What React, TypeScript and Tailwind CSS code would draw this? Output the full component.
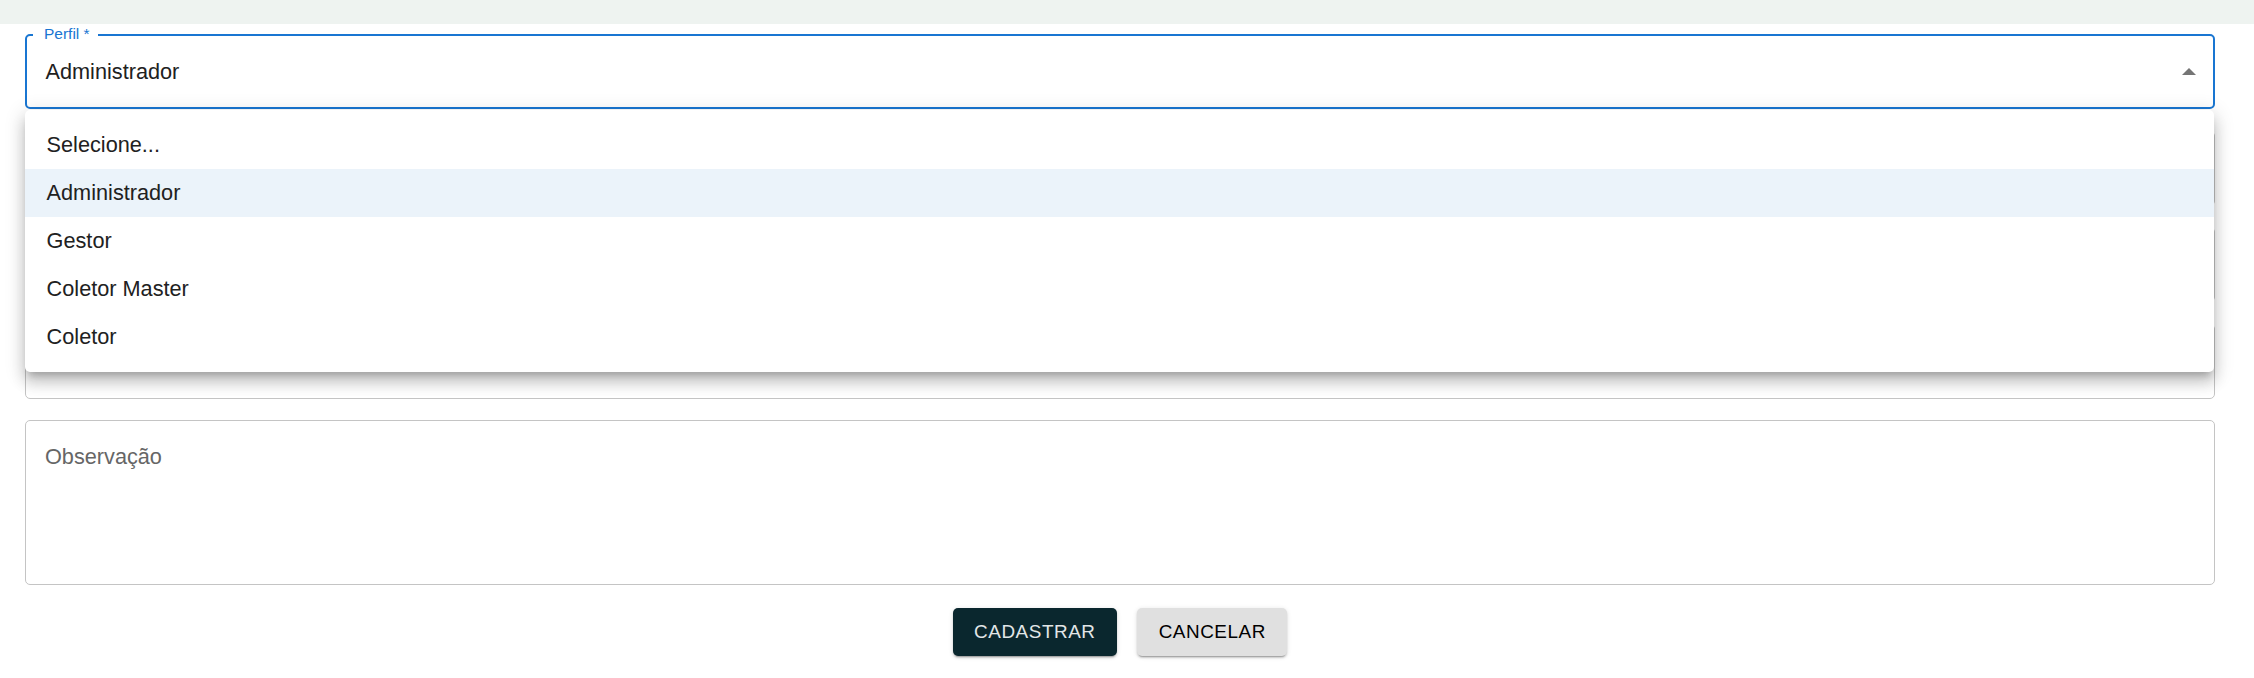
import React from "react";

const items = ["Selecione...", "Administrador", "Gestor", "Coletor Master", "Coletor"];

function EmptyField() {
  return <div className="h-[75px] rounded-[5px] border border-[#c4c4c4] bg-white" />;
}

export default function App() {
  return (
    <div className="min-h-[678px] w-full bg-white text-[#212121]" style={{ fontFamily: '"Liberation Sans", Arial, Helvetica, sans-serif' }}>
      <div className="h-[24px] w-full bg-[#eef3f0]" />
      <div className="pl-[25px] pr-[39px] pt-[10px]">
        <div className="flex flex-col gap-[21.6px]">
          {/* Perfil select (focused, open) */}
          <div className="relative z-10">
            <div className="relative flex h-[75px] items-center rounded-[5px] border-2 border-[#1976d2] bg-white pl-[18.5px] pr-[17px]">
              <span className="absolute left-[6px] top-[-12px] bg-white pl-[11px] pr-[8px] text-[15.5px] leading-[20px] text-[#1976d2]">
                Perfil *
              </span>
              <span className="flex-1 text-[21.7px] leading-[30px]">Administrador</span>
              <svg width="14" height="7" viewBox="0 0 14 7" className="block">
                <path d="M0 7 L7 0 L14 7 Z" fill="#757575" />
              </svg>
            </div>
            {/* Dropdown menu */}
            <div className="absolute left-0 right-[1px] top-[calc(100%+1px)] rounded-[5px] bg-white py-[10.8px] shadow-[0_7px_7px_-4px_rgba(0,0,0,0.2),0_11px_14px_1px_rgba(0,0,0,0.14),0_4px_19px_3px_rgba(0,0,0,0.12)]">
              {items.map((it, i) => (
                <div
                  key={it}
                  className={`flex h-[48px] items-center px-[21.6px] text-[21.7px] ${i === 1 ? "bg-[#ebf3fa]" : "bg-white"}`}
                >
                  {it}
                </div>
              ))}
            </div>
          </div>
          <EmptyField />
          <EmptyField />
          <EmptyField />
          {/* Observação */}
          <div className="h-[165px] rounded-[5px] border border-[#c4c4c4] bg-white pl-[19px] pt-[21px]">
            <span className="text-[21.7px] leading-[30px] text-[#666666]">Observação</span>
          </div>
        </div>
        <div className="mt-[23px] flex justify-center gap-[20px]">
          <button className="h-[48px] rounded-[5px] bg-[#0a272e] px-[21.6px] text-[18.9px] tracking-[0.54px] text-[#e2e6e7] shadow-[0_3px_1px_-2px_rgba(0,0,0,0.2),0_2px_2px_0_rgba(0,0,0,0.14),0_1px_5px_0_rgba(0,0,0,0.12)]">
            CADASTRAR
          </button>
          <button className="h-[48px] rounded-[5px] bg-[#e0e0e0] px-[21.6px] text-[18.9px] tracking-[0.54px] text-black shadow-[0_3px_1px_-2px_rgba(0,0,0,0.2),0_2px_2px_0_rgba(0,0,0,0.14),0_1px_5px_0_rgba(0,0,0,0.12)]">
            CANCELAR
          </button>
        </div>
      </div>
    </div>
  );
}
